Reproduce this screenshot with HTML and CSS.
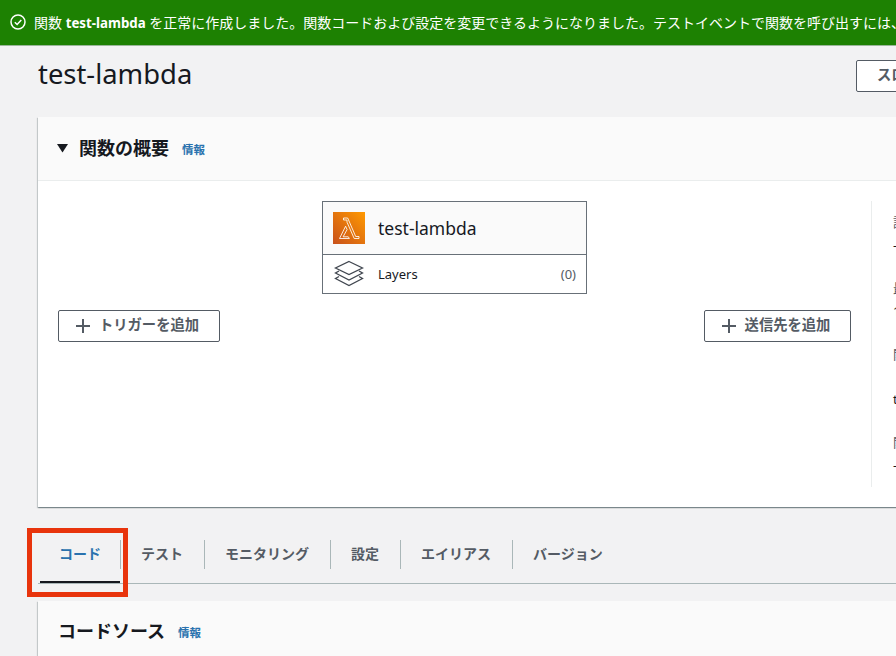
FILE: index.html
```html
<!DOCTYPE html>
<html lang="ja">
<head>
<meta charset="utf-8">
<title>test-lambda</title>
<link rel="stylesheet" href="styles.css">
</head>
<body>
<div class="page">
  <div class="flash">
    <svg class="flash-icon" viewBox="0 0 16 16" width="16" height="16"><circle cx="8" cy="8" r="7" fill="none" stroke="#fff" stroke-width="1.5"/><path d="M4.800 8.200l2.300 2.300 4.200-4.600" fill="none" stroke="#fff" stroke-width="1.500"/></svg>
    <span class="flash-text">関数 <b>test-lambda</b> を正常に作成しました。関数コードおよび設定を変更できるようになりました。テストイベントで関数を呼び出すには、[テスト] を選択します。</span>
  </div>
  <main class="main">
    <div class="title-row">
      <h1 class="title">test-lambda</h1>
      <button class="btn btn-throttle">スロットル</button>
    </div>
    <section class="card overview">
      <header class="card-head">
        <svg class="caret" viewBox="0 0 11 10" width="11" height="10"><path d="M0 1h11L5.500 9.500z" fill="#16191f"/></svg>
        <h2 class="card-title">関数の概要</h2>
        <a class="info">情報</a>
      </header>
      <div class="card-body">
        <div class="diagram">
          <div class="side-col">
            <button class="btn btn-add">
              <svg viewBox="0 0 16 16" width="16" height="16"><path d="M8 1v14M1 8h14" stroke="#545b64" stroke-width="2" fill="none"/></svg>
              トリガーを追加
            </button>
          </div>
          <div class="fn-box">
            <div class="fn-head">
              <svg class="lambda" viewBox="0 0 32 32" width="32" height="32">
                <defs><linearGradient id="lg" x1="0" y1="1" x2="1" y2="0"><stop offset="0" stop-color="#c8511b"/><stop offset="1" stop-color="#ff9900"/></linearGradient></defs>
                <rect width="32" height="32" fill="url(#lg)"/>
                <path d="M10.500 6h4.200l8 18.500h3.300v2h-4.800L14 10.200V8h-3.500zM12.600 14.200l1.500 3.400-4 7.200h5.200l1.100 1.700H6.500z" fill="none" stroke="#fff" stroke-width="1" opacity=".85"/>
              </svg>
              <span class="fn-name">test-lambda</span>
            </div>
            <div class="fn-layers">
              <svg class="stack" viewBox="0 0 30 28" width="30" height="28"><g fill="none" stroke="#414750" stroke-width="1.300"><path d="M15 1.500L28.500 8 15 14.500 1.500 8z"/><path d="M5 11L1.500 13 15 20 28.500 13 25 11"/><path d="M5 16.500L1.500 18.500 15 25.500 28.500 18.500 25 16.500"/></g></svg>
              <span class="layers-name">Layers</span>
              <span class="layers-count">(0)</span>
            </div>
          </div>
          <div class="side-col side-right">
            <button class="btn btn-add">
              <svg viewBox="0 0 16 16" width="16" height="16"><path d="M8 1v14M1 8h14" stroke="#545b64" stroke-width="2" fill="none"/></svg>
              送信先を追加
            </button>
          </div>
        </div>
        <aside class="meta">
          <div class="meta-item"><div class="meta-label">説明</div><div class="meta-value">-</div></div>
          <div class="meta-item"><div class="meta-label">最終更新</div><div class="meta-value">1 分前</div></div>
          <div class="meta-item meta-arn"><div class="meta-label">関数の ARN</div><div class="meta-value">test-lambda</div></div>
          <div class="meta-item"><div class="meta-label">関数 URL</div><div class="meta-value">-</div></div>
        </aside>
      </div>
    </section>
    <nav class="tabs">
      <a class="tab tab-active">コード</a>
      <a class="tab">テスト</a>
      <a class="tab">モニタリング</a>
      <a class="tab">設定</a>
      <a class="tab">エイリアス</a>
      <a class="tab">バージョン</a>
    </nav>
    <section class="card source">
      <header class="source-head">
        <h2 class="card-title">コードソース</h2>
        <a class="info">情報</a>
      </header>
    </section>
  </main>
  <div class="callout"></div>
</div>
</body>
</html>
```
FILE: styles.css
```css
* { box-sizing: border-box; }
html, body { margin: 0; height: 100%; overflow: hidden; }
body {
  background: #f2f2f3;
  color: #16191f;
  font-family: "Noto Sans", "Noto Sans CJK JP", sans-serif;
}
.page { position: relative; width: 896px; height: 656px; overflow: hidden; }
.flash {
  display: flex;
  align-items: center;
  height: 46px;
  padding: 0 0 2px 10px;
  background: #1d8102;
  border-bottom: 1px solid #9ab79a;
  color: #fff;
  font-size: 14px;
  white-space: nowrap;
}
.flash-icon { flex: none; margin-right: 8px; }
.flash-text b { font-size: 13.300px; }
.main { width: 1300px; padding-left: 38px; }
.title-row { display: flex; align-items: center; height: 71px; padding-bottom: 11px; }
.title { margin: -4px 0 0; width: 818px; font-size: 27.400px; font-weight: 400; line-height: 36px; }
.btn {
  display: inline-flex;
  align-items: center;
  justify-content: center;
  gap: 8px;
  height: 32px;
  background: #fff;
  border: 1px solid #545b64;
  border-radius: 2px;
  color: #545b64;
  font-family: inherit;
  font-size: 14.300px;
  line-height: 28px;
  font-weight: 700;
  white-space: nowrap;
  padding: 0 4px 2px 0;
}
.btn svg { margin-top: 2px; }
.btn-throttle { width: 110px; justify-content: flex-start; padding-left: 20px; }
.card {
  background: #fff;
  box-shadow: 0 1px 1px rgba(0,28,36,.3), 1px 1px 1px rgba(0,28,36,.15), -1px 1px 1px rgba(0,28,36,.15);
}
.overview { height: 390px; }
.card-head {
  display: flex;
  align-items: center;
  height: 64px;
  padding: 0 0 2px 19px;
  background: #fafafa;
  border-bottom: 1px solid #eaeded;
}
.caret { margin-right: 11px; }
.card-title { margin: 0; font-size: 18px; font-weight: 700; line-height: 24px; }
.info { margin-left: 13px; padding-top: 2px; color: #2a72ae; font-size: 11.500px; font-weight: 700; }
.card-body { display: flex; padding: 20px 0 20px 20px; }
.diagram { display: flex; width: 793px; height: 286px; }
.side-col { width: 264px; padding-top: 109px; }
.side-col .btn { width: 162px; }
.side-right { display: flex; justify-content: flex-end; align-items: flex-start; }
.side-right .btn { width: 147px; }
.fn-box {
  width: 265px;
  height: 93px;
  background: #fff;
  border: 1px solid #687078;
  display: flex;
  flex-direction: column;
}
.fn-head {
  display: flex;
  align-items: center;
  height: 53px;
  padding-left: 10px;
  background: #fafafa;
  border-bottom: 1px solid #687078;
}
.lambda { margin-right: 13px; }
.fn-name { font-size: 17.500px; }
.fn-layers { display: flex; align-items: center; flex: 1; padding: 0 10px 0 11px; font-size: 13px; color: #16191f; }
.stack { margin-right: 14px; }
.layers-count { margin-left: auto; color: #545b64; }
.meta {
  flex: none;
  width: 300px;
  height: 286px;
  margin-left: 20px;
  padding-left: 21px;
  border-left: 1px solid #eaeded;
  font-size: 13px;
}
.meta-item { height: 66px; padding-top: 11px; line-height: 20px; }
.meta-label { color: #545b64; }
.meta-value { color: #16191f; margin-top: 3px; }
.meta-arn { height: 88px; }
.meta-arn .meta-value { margin-top: 25px; }
.tabs {
  display: flex;
  align-items: stretch;
  width: 858px;
  height: 54px;
  margin-top: 23px;
  padding: 9px 0 0 2px;
  border-bottom: 1px solid #aab7b8;
}
.tab {
  position: relative;
  display: flex;
  align-items: flex-start;
  padding: 4px 21px 0;
  height: 44px;
  color: #545b64;
  font-size: 14px;
  font-weight: 700;
  white-space: nowrap;
}
.tab + .tab::before {
  content: "";
  position: absolute;
  left: 0;
  top: 1px;
  height: 29px;
  border-left: 1px solid #aab7b8;
}
.tab-active { color: #2a72ae; width: 80px; padding: 4px 0 0; justify-content: center; border-bottom: 2px solid #16191f; }
.source { height: 100px; margin-top: 17px; background: #fafafa; }
.source-head { display: flex; align-items: center; height: 60px; padding-left: 20px; }
.callout {
  position: absolute;
  left: 27px;
  top: 528px;
  width: 101px;
  height: 69px;
  border: 5px solid #e8340c;
}
```
